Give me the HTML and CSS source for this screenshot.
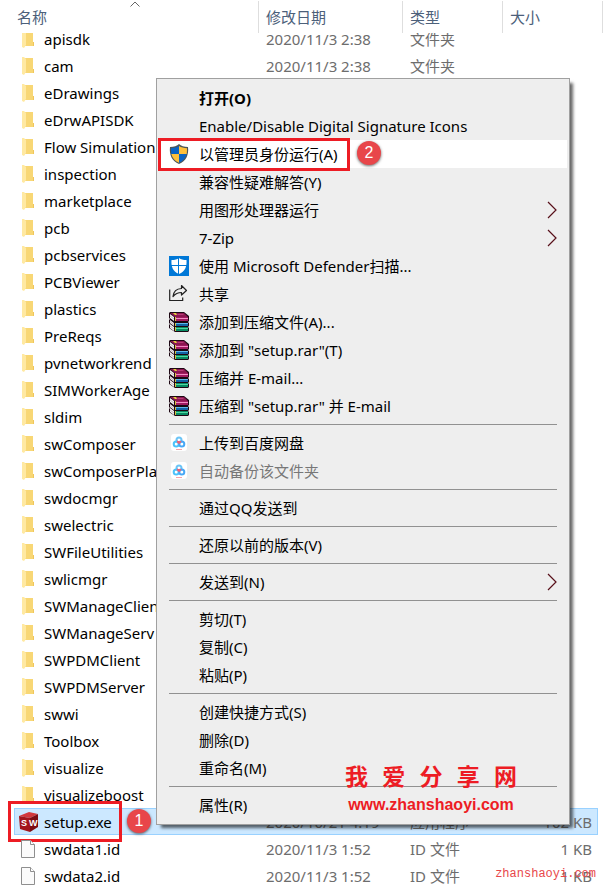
FILE: index.html
```html
<!DOCTYPE html>
<html lang="zh-CN">
<head>
<meta charset="utf-8">
<title>setup.exe</title>
<link rel="stylesheet" href="styles.css">
</head>
<body>
<svg class="sprites" aria-hidden="true">
  <symbol id="folder" viewBox="0 0 14 18">
    <path fill="#f8d775" d="M3 1h9v11h1v4H3z"/>
    <path fill="#efc65c" d="M12 12h1v4h-1z"/>
    <path fill="#ffe9a2" d="M1 0h2l2 2v13l-2 3-2-1z"/>
  </symbol>
  <symbol id="file" viewBox="0 0 14 18">
    <path fill="#fbfbfb" stroke="#8f8f8f" d="M.5.5h9l4 4v13H.5z"/>
    <path fill="#fff" stroke="#8f8f8f" d="M9.500.5v4h4"/>
  </symbol>
  <symbol id="shield" viewBox="0 0 20 20">
    <path fill="#4c5558" d="M10 0c2 2 5 3 9 3 1 8-2 14-9 17C3 17 0 11 1 3c4 0 7-1 9-3z"/>
    <path fill="#0a63c4" d="M10 2v8H2.300C2 8 2 6 2 4.200 5 4 8 3.500 10 2zM10 10h7.700c-1 4-3.500 7-7.700 8.800z"/>
    <path fill="#ffc03a" d="M10 2c2 1.500 5 2 8 2.200 0 1.800 0 3.800-.3 5.800H10zM10 10v8.800C5.800 17 3.300 14 2.300 10z"/>
  </symbol>
  <symbol id="defender" viewBox="0 0 20 20">
    <path fill="#0078d7" d="M0 0h20v20H0z"/>
    <path fill="#fff" d="M10 2c2 1.500 4 2 7.500 2C18 11 16 15.500 10 18 4 15.500 2 11 2.500 4 6 4 8 3.500 10 2z"/>
    <path stroke="#0078d7" d="M9.500 1v18M2 9.500h16"/>
  </symbol>
  <symbol id="share" viewBox="0 0 20 20">
    <path fill="none" stroke="#222" stroke-width="1.200" stroke-linejoin="round" d="M.7 5.500v11h13v-3M12.500 1.500l5 5-5 4.500V8.500c-4 0-6 1-8.500 4C4.500 8 7.500 4.700 12.500 4.500z"/>
  </symbol>
  <symbol id="winrar" viewBox="0 0 20 20">
    <path fill="#1c0713" d="M0 1l1-1h14l5 4v5l-1 1 1 1v3l-1 1 1 1v3l-1 1H6l-6-4v-3l1-1-1-1V8l1-1-1-1z"/>
    <path fill="#8c1650" d="M1 1h14l4 4H6z"/>
    <path fill="#b53a76" d="M8 2h6l1 1H9z"/>
    <path fill="#f6f2f4" d="M1 2l4 3v4L1 6zM1 8l4 3v3l-4-3zM1 12l4 3v4l-4-3z"/>
    <path stroke="#8c8088" stroke-width=".5" d="M1 4l4 3M1 9.500l4 3M1 14l4 3"/>
    <path fill="#a01a60" d="M6 5h13v4H6z"/>
    <path fill="#f28cc2" d="M7 6h12v1H7z"/>
    <path fill="#1363a5" d="M6 11h13v3H6z"/>
    <path fill="#5cb9ea" d="M7 11h12v1H7z"/>
    <path fill="#078b63" d="M6 15h13v4H6z"/>
    <path fill="#51d6a0" d="M7 16h12v1H7z"/>
    <path fill="#e2cf3c" d="M4 1h3l1 2H6z"/>
    <path fill="#d8c23e" d="M6 5h1v4H6zM6 11h1v3H6zM6 15h1v4H6z"/>
  </symbol>
  <symbol id="netdisk" viewBox="0 0 20 20">
    <rect x="2" y="1" width="16" height="17" rx="3" fill="#fff"/>
    <g fill="none" stroke-width="2">
      <circle cx="10" cy="7" r="2.500" stroke="#6cc4f6"/>
      <circle cx="7.200" cy="11" r="2.500" stroke="#4cc2fa"/>
      <circle cx="12.800" cy="11" r="2.500" stroke="#48a8f6"/>
      <path stroke="#ef6077" d="M8 8.500c1 .2 2 1 2.500 2M11.500 8c-.3 1-.8 1.500-1.500 2"/>
    </g>
    <path fill="#f6a2a8" d="M7 16h6v1H7z"/>
  </symbol>
  <symbol id="chevron" viewBox="0 0 10 18">
    <path fill="none" stroke="#58101a" stroke-width="1.200" d="M1 1l8 8-8 8"/>
  </symbol>
</svg>

<main class="explorer">
  <table class="files">
    <thead>
      <tr>
        <th class="col-name"><button class="sort">名称</button><svg class="sort-mark" viewBox="0 0 10 6"><path fill="none" stroke="#666" d="M.5 5.500 5 1l4.500 4.500"/></svg></th>
        <th class="col-date"><button class="sort">修改日期</button></th>
        <th class="col-type"><button class="sort">类型</button></th>
        <th class="col-size"><button class="sort">大小</button></th>
      </tr>
    </thead>
    <tbody id="rows"></tbody>
  </table>

  <div class="menu" role="menu">
    <button class="item default" role="menuitem">打开(O)</button>
    <button class="item" role="menuitem">Enable/Disable Digital Signature Icons</button>
    <div class="marked">
      <button class="item hover" role="menuitem"><svg class="icon"><use href="#shield"/></svg>以管理员身份运行(A)</button>
      <span class="frame frame-run"></span><span class="badge badge-run">2</span>
    </div>
    <button class="item" role="menuitem">兼容性疑难解答(Y)</button>
    <button class="item" role="menuitem">用图形处理器运行<svg class="chevron"><use href="#chevron"/></svg></button>
    <button class="item" role="menuitem">7-Zip<svg class="chevron"><use href="#chevron"/></svg></button>
    <button class="item" role="menuitem"><svg class="icon"><use href="#defender"/></svg>使用 Microsoft Defender扫描...</button>
    <button class="item" role="menuitem"><svg class="icon"><use href="#share"/></svg>共享</button>
    <button class="item" role="menuitem"><svg class="icon"><use href="#winrar"/></svg>添加到压缩文件(A)...</button>
    <button class="item" role="menuitem"><svg class="icon"><use href="#winrar"/></svg>添加到 "setup.rar"(T)</button>
    <button class="item" role="menuitem"><svg class="icon"><use href="#winrar"/></svg>压缩并 E-mail...</button>
    <button class="item" role="menuitem"><svg class="icon"><use href="#winrar"/></svg>压缩到 "setup.rar" 并 E-mail</button>
    <hr class="rule">
    <button class="item" role="menuitem"><svg class="icon"><use href="#netdisk"/></svg>上传到百度网盘</button>
    <button class="item" role="menuitem" disabled><svg class="icon"><use href="#netdisk"/></svg>自动备份该文件夹</button>
    <hr class="rule">
    <button class="item" role="menuitem">通过QQ发送到</button>
    <hr class="rule">
    <button class="item" role="menuitem">还原以前的版本(V)</button>
    <hr class="rule">
    <button class="item" role="menuitem">发送到(N)<svg class="chevron"><use href="#chevron"/></svg></button>
    <hr class="rule">
    <button class="item" role="menuitem">剪切(T)</button>
    <button class="item" role="menuitem">复制(C)</button>
    <button class="item" role="menuitem">粘贴(P)</button>
    <hr class="rule">
    <button class="item" role="menuitem">创建快捷方式(S)</button>
    <button class="item" role="menuitem">删除(D)</button>
    <button class="item" role="menuitem">重命名(M)</button>
    <hr class="rule">
    <button class="item" role="menuitem">属性(R)</button>
    <div class="brand">
      <div class="brand-name"><span>我</span><span>爱</span><span>分</span><span>享</span><span>网</span></div>
      <div class="brand-url">www.zhanshaoyi.com</div>
    </div>
  </div>
  <div class="site-mark">zhanshaoyi.com</div>
</main>
<script src="script.js"></script>
</body>
</html>
```
FILE: styles.css
```css
* { box-sizing: border-box; }

body {
  margin: 0;
  background: #fff;
  color: #000;
  font: 15px/20px "Noto Sans", "Noto Sans CJK SC", sans-serif;
}

button {
  margin: 0;
  padding: 0;
  border: 0;
  background: none;
  color: inherit;
  font: inherit;
  text-align: left;
}

.sprites { position: absolute; width: 0; height: 0; }
.logo-letter { fill: #fff; font: bold 9px "Liberation Sans", sans-serif; }

.explorer {
  position: relative;
  height: 100vh;
  overflow: hidden;
  padding: 0 18px 0 14px;
}

/* File list */
.files { width: 100%; table-layout: fixed; border-collapse: separate; border-spacing: 0; }
.files th { position: relative; height: 25px; padding: 0; font-weight: normal; text-align: left; vertical-align: top; }
.files th::after {
  content: "";
  position: absolute;
  z-index: 2;
  top: 1px;
  right: -1px;
  width: 1px;
  height: 32px;
  background: #dedede;
}
.files .col-size::after { right: -5px; }
.col-date { width: 144px; }
.col-type { width: 100px; }
.col-size { width: 96px; }
/* The header overlaps the top of the scrolled first row. */
.sort {
  position: relative;
  z-index: 1;
  display: block;
  width: 100%;
  height: 33px;
  margin-bottom: -8px;
  padding: 0 0 0 8px;
  background: #fff;
  color: #4c607a;
}
.col-name .sort { padding-left: 3px; }
.sort-mark { position: absolute; z-index: 2; top: 1px; left: calc(50% - 6px); width: 10px; height: 6px; }

.files td {
  height: 27px;
  padding: 0 0 0 8px;
  border: solid transparent;
  border-width: 1px 0;
  color: #6d6d6d;
  white-space: nowrap;
}
.files td:first-child { padding-left: 7px; color: #000; }
.files td:last-child { padding: 0 6px 0 0; text-align: right; }
.files .selected td { background: #cce8ff; border-color: #99d1ff; }
.files .selected td:first-child { border-left: 1px solid #99d1ff; padding-left: 4px; }
.files .selected td:last-child { border-right: 1px solid #99d1ff; padding-right: 5px; }
.name { position: relative; display: flex; align-items: center; gap: 9px; }
.name svg { flex: none; width: 14px; height: 18px; }
.selected .name { gap: 5px; }
.selected .name svg { width: 20px; height: 20px; }

/* Context menu */
.menu {
  position: absolute;
  z-index: 3;
  top: 78px;
  left: 156px;
  right: 46px;
  padding: 5px 2px;
  border: 1px solid #a0a0a0;
  background: #eee;
  box-shadow: 4px 4px 3px -1px rgba(0, 0, 0, .6);
}
.item {
  position: relative;
  display: flex;
  align-items: center;
  width: 100%;
  height: 28px;
  padding-left: 40px;
  white-space: nowrap;
}
.item.default { font-weight: bold; }
.item.hover { background: #fff; }
.item:disabled { color: #777; }
.item .icon { width: 20px; height: 20px; margin: 0 10px 0 -30px; }
.chevron { width: 10px; height: 18px; margin: 0 10px 0 auto; }
.rule { height: 1px; margin: 4px 10px; border: 0; background: #919191; }

/* Step marks */
.marked { position: relative; }
.frame { position: absolute; border: 3px solid #ed1c24; pointer-events: none; }
.frame-run { top: -2px; left: -1px; width: 192px; height: 33px; }
.frame-setup { top: -11px; left: -11px; width: 114px; height: 41px; }
.badge {
  position: absolute;
  width: 24px;
  height: 24px;
  border-radius: 50%;
  background: #e8464a;
  box-shadow: 0 1px 3px rgba(0, 0, 0, .6);
  color: #fff;
  font: 16px/24px "Liberation Sans", sans-serif;
  text-align: center;
}
.badge-run { top: 1px; left: 198px; }
.badge-setup { top: -3px; left: 108px; }

/* Site name */
.brand { position: absolute; right: 52px; bottom: 5px; width: 172px; color: #ed1c24; font-weight: bold; text-align: center; pointer-events: none; }
.brand-name { display: flex; justify-content: space-between; font-size: 23px; line-height: 30px; }
.brand-url { font: bold 16px/28px "Liberation Sans", sans-serif; }
.site-mark {
  position: absolute;
  right: 20px;
  bottom: 7px;
  color: #e8464a;
  font: 12px/16px "Liberation Mono", monospace;
}
```
FILE: script.js
```js
const folders = [
  "eDrawings", "eDrwAPISDK", "Flow Simulation", "inspection",
  "marketplace", "pcb", "pcbservices", "PCBViewer", "plastics", "PreReqs",
  "pvnetworkrend", "SIMWorkerAge", "sldim", "swComposer", "swComposerPla",
  "swdocmgr", "swelectric", "SWFileUtilities", "swlicmgr", "SWManageClien",
  "SWManageServ", "SWPDMClient", "SWPDMServer", "swwi", "Toolbox",
  "visualize", "visualizeboost"
];

const icon = id => `<svg><use href="#${id}"/></svg>`;

const logo = `<svg viewBox="0 0 20 20">
  <path fill="#d2383c" d="M0 4 10 0l9 2-8 4z"/>
  <path fill="#a3151b" d="M0 4l11 2v14L1 17z"/>
  <path fill="#7c0d13" d="M11 6l8-4v13l-8 5z"/>
  <text class="logo-letter" x="2" y="14">S</text>
  <text class="logo-letter" x="10" y="14">W</text>
</svg>`;

const marks = '<span class="frame frame-setup"></span><span class="badge badge-setup">1</span>';

const entries = [
  { name: "apisdk", icon: icon("folder"), date: "2020/11/3 2:38", type: "文件夹" },
  { name: "cam", icon: icon("folder"), date: "2020/11/3 2:38", type: "文件夹" },
  ...folders.map(name => ({ name, icon: icon("folder") })),
  { name: "setup.exe", icon: logo, date: "2020/10/21 4:19", type: "应用程序", size: "102 KB", selected: true },
  { name: "swdata1.id", icon: icon("file"), date: "2020/11/3 1:52", type: "ID 文件", size: "1 KB" },
  { name: "swdata2.id", icon: icon("file"), date: "2020/11/3 1:52", type: "ID 文件", size: "1 KB" }
];

document.getElementById("rows").innerHTML = entries.map(e => `
  <tr class="${e.selected ? "selected" : ""}">
    <td><div class="name">${e.icon}<span>${e.name}</span>${e.selected ? marks : ""}</div></td>
    <td>${e.date || ""}</td>
    <td>${e.type || ""}</td>
    <td>${e.size || ""}</td>
  </tr>`).join("");
```
